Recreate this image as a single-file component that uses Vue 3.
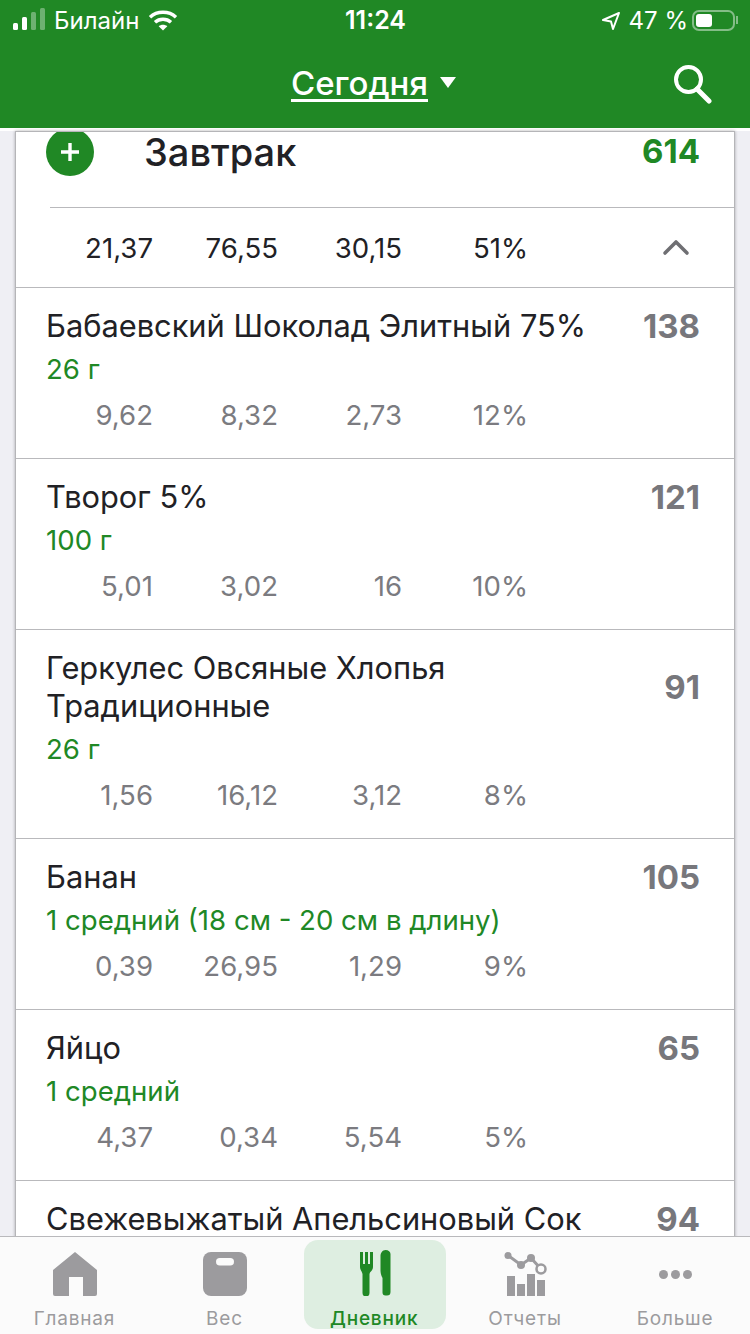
<template>
  <div class="screen">
    <header class="top">
      <div class="status">
        <div class="status-left">
          <svg class="signal" width="34" height="24" viewBox="0 0 34 24" fill="#fff">
            <rect x="0" y="15" width="5" height="7" rx="1.5" />
            <rect x="9" y="9" width="5" height="13" rx="1.5" />
            <rect x="18" y="4" width="5" height="18" rx="1.5" opacity=".35" />
            <rect x="27" y="0" width="5" height="22" rx="1.5" opacity=".35" />
          </svg>
          <span>Билайн</span>
          <svg class="wifi" width="30" height="22" viewBox="0 0 30 22" fill="none" stroke="#fff" stroke-width="3.4">
            <path d="M2 8.2c7-6.6 19-6.6 26 0" />
            <path d="M7 13.2c4.400-4 11.600-4 16 0" />
            <path d="M15 21.500l-4.300-4.300c2.400-2 6.200-2 8.600 0z" fill="#fff" stroke="none" />
          </svg>
        </div>
        <div class="status-time">11:24</div>
        <div class="status-right">
          <svg class="arrow" width="22" height="22" viewBox="0 0 22 22" fill="none" stroke="#fff" stroke-width="2" stroke-linejoin="round">
            <path d="M20 4 4 11l8 1.500 2 7.500z" />
          </svg>
          <span>47 %</span>
          <div class="battery"><i></i></div>
          <div class="nub"></div>
        </div>
      </div>
      <div class="nav">
        <span class="nav-title">Сегодня</span>
        <span class="nav-caret"></span>
        <svg class="nav-search" width="40" height="40" viewBox="0 0 40 40" fill="none" stroke="#fff" stroke-width="4" stroke-linecap="round">
          <circle cx="16.500" cy="14.500" r="12.500" />
          <path d="M25 24l12 12" stroke-width="5" />
        </svg>
      </div>
    </header>

    <main class="content">
      <section class="card">
        <div class="meal-head">
          <div class="add-btn">
            <svg width="24" height="24" viewBox="0 0 24 24" stroke="#fff" stroke-width="3.400"><path d="M12 3v18M3 12h18" /></svg>
          </div>
          <div class="meal-name">Завтрак</div>
          <div class="meal-cal">614</div>
        </div>
        <div class="meal-sum">
          <div class="macros macros-dark">
            <span v-for="(m, i) in totals" :key="i">{{ m }}</span>
          </div>
          <svg class="chevron" width="28" height="18" viewBox="0 0 28 18" fill="none" stroke="#6f6f73" stroke-width="3.600" stroke-linecap="round" stroke-linejoin="round">
            <path d="M3 15 14 4l11 11" />
          </svg>
        </div>
        <div v-for="food in foods" :key="food.name" class="food">
          <div class="food-top">
            <div class="food-name">
              <div v-for="line in food.name.split('|')" :key="line">{{ line }}</div>
            </div>
            <div class="food-cal">{{ food.cal }}</div>
          </div>
          <template v-if="food.amount">
            <div class="food-amount">{{ food.amount }}</div>
            <div class="macros">
              <span v-for="(m, i) in food.macros" :key="i">{{ m }}</span>
            </div>
          </template>
        </div>
      </section>
    </main>

    <nav class="tabs">
      <div class="tab">
        <svg width="44" height="44" viewBox="0 0 44 44" fill="#9c9b9e">
          <path d="M22 0 44 18v24a2 2 0 0 1-2 2H30V25H16v19H2a2 2 0 0 1-2-2V18z" />
        </svg>
        <span>Главная</span>
      </div>
      <div class="tab">
        <svg width="44" height="44" viewBox="0 0 44 44">
          <rect width="44" height="44" rx="8" fill="#9c9b9e" />
          <rect x="13" y="6" width="18" height="7.500" rx="3.750" fill="#fbfbfb" />
        </svg>
        <span>Вес</span>
      </div>
      <div class="tab active">
        <svg width="34" height="46" viewBox="-2 0 34 46" fill="#208825">
          <path d="M0 2h3v12h2V2h3v12h2V2h3v15c0 2.500-1.500 4-3 5.500l-.5 1.500v19a3.500 3.500 0 0 1-7 0V24l-.5-1.500C1.500 21 0 19.500 0 17z" />
          <path d="M20.500 6c0-3 2-6 5-6s5 2 5 4v38a3.500 3.500 0 0 1-3.500 3.500h-1.500a3 3 0 0 1-3-3V28c-1.500-3-2-5-2-8z" />
        </svg>
        <span>Дневник</span>
      </div>
      <div class="tab">
        <svg width="58" height="44" viewBox="0 0 58 44">
          <path d="M10 2l15 11 10-7 10 11" fill="none" stroke="#9c9b9e" stroke-width="3" />
          <circle cx="12" cy="3.500" r="3.500" fill="#9c9b9e" />
          <circle cx="25" cy="13" r="4" fill="#9c9b9e" />
          <circle cx="35" cy="6" r="4" fill="#9c9b9e" />
          <circle cx="45" cy="17" r="4.500" fill="#fbfbfb" stroke="#9c9b9e" stroke-width="2.500" />
          <rect x="11" y="24" width="8" height="20" fill="#9c9b9e" />
          <rect x="21" y="32" width="8" height="12" fill="#9c9b9e" />
          <rect x="31" y="22" width="8" height="22" fill="#9c9b9e" />
          <rect x="41" y="28" width="8" height="16" fill="#9c9b9e" />
        </svg>
        <span>Отчеты</span>
      </div>
      <div class="tab">
        <div class="dots"><i></i><i></i><i></i></div>
        <span>Больше</span>
      </div>
    </nav>
  </div>
</template>

<script setup>
const totals = ['21,37', '76,55', '30,15', '51%']

const foods = [
  { name: 'Бабаевский Шоколад Элитный 75%', amount: '26 г', cal: 138, macros: ['9,62', '8,32', '2,73', '12%'] },
  { name: 'Творог 5%', amount: '100 г', cal: 121, macros: ['5,01', '3,02', '16', '10%'] },
  { name: 'Геркулес Овсяные Хлопья|Традиционные', amount: '26 г', cal: 91, macros: ['1,56', '16,12', '3,12', '8%'] },
  { name: 'Банан', amount: '1 средний (18 см - 20 см в длину)', cal: 105, macros: ['0,39', '26,95', '1,29', '9%'] },
  { name: 'Яйцо', amount: '1 средний', cal: 65, macros: ['4,37', '0,34', '5,54', '5%'] },
  { name: 'Свежевыжатый Апельсиновый Сок', cal: 94 }
]
</script>

<style>
html, body { margin: 0; background: #efeff4; }
</style>

<style scoped>
.screen {
  width: 750px;
  height: 1334px;
  display: flex;
  flex-direction: column;
  overflow: hidden;
  background: #efeff4;
  font-family: Inter, "Liberation Sans", sans-serif;
  color: #212125;
}
.top {
  background: #208825;
  color: #fff;
  height: 128px;
  flex: none;
}
.status {
  height: 40px;
  display: grid;
  grid-template-columns: 1fr auto 1fr;
  align-items: center;
  font-size: 24px;
  padding: 0 12px 0 13px;
}
.status-left, .status-right {
  display: flex;
  align-items: center;
}
.status-left { gap: 8px; }
.status-left .signal { margin-right: -1px; }
.status-left .wifi { margin-left: 1px; }
.status-right { justify-content: flex-end; gap: 10px; }
.status-right .arrow { margin-right: -2px; }
.status-time { font-size: 25px; font-weight: 600; }
.battery {
  width: 43px;
  height: 21px;
  box-sizing: border-box;
  border: 2px solid rgba(255, 255, 255, .45);
  border-radius: 7px;
  padding: 2px;
  margin-left: -6px;
}
.battery i {
  display: block;
  width: 16px;
  height: 13px;
  background: #fff;
  border-radius: 3px;
}
.nub {
  width: 2px;
  height: 8px;
  background: rgba(255, 255, 255, .45);
  margin-left: -9px;
}
.nav {
  position: relative;
  height: 88px;
  display: flex;
  align-items: center;
  justify-content: center;
  gap: 12px;
  padding: 0 3px 3px 0;
  box-sizing: border-box;
}
.nav-title {
  font-size: 33px;
  font-weight: 500;
  text-decoration: underline;
  text-decoration-skip-ink: none;
  text-underline-offset: 4px;
  text-decoration-thickness: 3px;
}
.nav-caret {
  width: 0;
  height: 0;
  border-left: 8px solid transparent;
  border-right: 8px solid transparent;
  border-top: 11px solid #fff;
}
.nav-search {
  position: absolute;
  right: 38px;
  top: 25px;
}
.content {
  flex: 1;
  min-height: 0;
  overflow: hidden;
  background: linear-gradient(#fff 0 3px, transparent 3px);
  padding: 3px 15px 0;
}
.card {
  background: #fff;
  border: 1px solid #b5b5b8;
  border-bottom: 0;
  box-shadow: 0 0 3px rgba(0, 0, 0, .3);
  overflow: hidden;
}
.meal-head {
  height: 75px;
  display: flex;
  align-items: flex-start;
  padding-right: 34px;
  border-bottom: 1px solid #b9b9bc;
  margin-left: 34px;
}
.add-btn {
  width: 48px;
  height: 48px;
  margin: -4px 0 0 -4px;
  border-radius: 50%;
  background: #208825;
  display: flex;
  align-items: center;
  justify-content: center;
  flex: none;
}
.meal-name {
  font-size: 38px;
  font-weight: 500;
  line-height: 44px;
  margin: -2px 0 0 50px;
  flex: 1;
}
.meal-cal {
  color: #208825;
  font-size: 33px;
  font-weight: 700;
  line-height: 40px;
  margin-top: -1px;
}
.meal-sum {
  height: 79px;
  display: flex;
  align-items: center;
  justify-content: space-between;
  padding: 0 44px 0 31px;
  border-bottom: 1px solid #b9b9bc;
}
.chevron { margin-top: -1px; }
.macros {
  display: grid;
  grid-template-columns: 106px 125px 124px 126px;
  justify-items: end;
  font-size: 27.6px;
  line-height: 34px;
  color: #7b7b80;
}
.macros-dark { color: #212125; }
.food {
  padding: 19px 34px 26px 30px;
  border-bottom: 1px solid #b9b9bc;
}
.food .macros { margin-left: 1px; }
.food-top {
  display: flex;
  justify-content: space-between;
  align-items: center;
}
.food-name {
  font-size: 30.8px;
  line-height: 38px;
}
.food-cal {
  font-size: 33px;
  font-weight: 700;
  color: #77777c;
  line-height: 38px;
}
.food-amount {
  color: #208825;
  font-size: 27.6px;
  line-height: 36px;
  margin-top: 6px;
  margin-bottom: 11px;
}
.tabs {
  height: 98px;
  flex: none;
  box-sizing: border-box;
  border-top: 1px solid #b9b9bc;
  background: #fbfbfb;
  display: grid;
  grid-template-columns: 149px 151px 150px 150px 150px;
}
.tab {
  display: flex;
  flex-direction: column;
  align-items: center;
  padding-top: 15px;
  font-size: 19px;
  color: #9c9b9e;
  position: relative;
}
.tab svg { display: block; }
.tab span {
  position: absolute;
  top: 70px;
  line-height: 24px;
  letter-spacing: .8px;
}
.tab.active {
  color: #208825;
  font-weight: 500;
  background: #deeee1;
  border-radius: 14px;
  margin: 3px 4px 5px 4px;
  padding-top: 10px;
}
.tab.active span { top: 67px; left: 26px; }
.dots {
  display: flex;
  gap: 3px;
  height: 44px;
  align-items: center;
}
.dots i {
  width: 9px;
  height: 9px;
  background: #9c9b9e;
  border-radius: 50%;
}
</style>
